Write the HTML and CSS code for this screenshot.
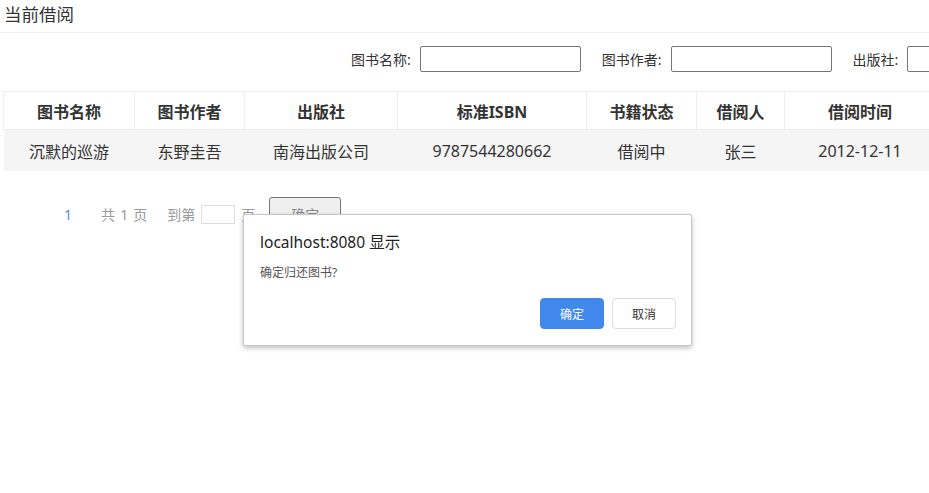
FILE: index.html
```html
<!DOCTYPE html>
<html lang="zh-CN">
<head>
    <meta charset="UTF-8">
    <title>当前借阅</title>
    <link rel="stylesheet" href="styles.css">
</head>
<body>
    <div class="page-title">当前借阅</div>

    <div class="search-bar">
        <label>图书名称:</label>
        <input type="text" class="search-input">
        <label>图书作者:</label>
        <input type="text" class="search-input">
        <label>出版社:</label>
        <input type="text" class="search-input">
    </div>

    <table class="borrow-table">
        <thead>
            <tr>
                <th class="col-name">图书名称</th>
                <th class="col-author">图书作者</th>
                <th class="col-press">出版社</th>
                <th class="col-isbn">标准ISBN</th>
                <th class="col-state">书籍状态</th>
                <th class="col-user">借阅人</th>
                <th class="col-time">借阅时间</th>
            </tr>
        </thead>
        <tbody>
            <tr>
                <td>沉默的巡游</td>
                <td>东野圭吾</td>
                <td>南海出版公司</td>
                <td>9787544280662</td>
                <td>借阅中</td>
                <td>张三</td>
                <td>2012-12-11</td>
            </tr>
        </tbody>
    </table>

    <div class="pager">
        <span class="pager-current">1</span>
        <span class="pager-total">共 1 页</span>
        <span class="pager-jump">到第</span>
        <input type="text" class="pager-input">
        <span class="pager-jump">页</span>
        <button class="pager-button">确定</button>
    </div>

    <!-- browser confirm() dialog -->
    <div class="confirm-dialog">
        <div class="confirm-title">localhost:8080 显示</div>
        <div class="confirm-message">确定归还图书?</div>
        <div class="confirm-actions">
            <button class="confirm-ok">确定</button>
            <button class="confirm-cancel">取消</button>
        </div>
    </div>
</body>
</html>
```

FILE: styles.css
```css
body {
    font-family: "Noto Sans", "Noto Sans CJK SC", sans-serif;
    margin: 0;
    padding: 0;
    color: #333;
    background-color: #fff;
    overflow: hidden;
    width: 929px;
    height: 493px;
    position: relative;
}
.page-title {
    font-size: 17.5px;
    line-height: 22px;
    padding: 3px 4px 7px;
    border-bottom: 1px solid #eee;
}
.search-bar {
    display: flex;
    align-items: center;
    white-space: nowrap;
    padding: 13px 0 0 351px;
    height: 26px;
    font-size: 14px;
}
.search-bar label {
    margin-right: 9px;
    word-spacing: 1px;
}
.search-input {
    flex: none;
    width: 161px;
    height: 26px;
    box-sizing: border-box;
    border: 1px solid #767676;
    border-radius: 2px;
    margin: 0 21px 0 0;
    padding: 0 4px;
}
.borrow-table {
    margin: 19px 0 0 3px;
    border-collapse: collapse;
    table-layout: fixed;
    width: 925px;
    font-size: 16px;
    text-align: center;
}
.borrow-table th {
    height: 37px;
    font-weight: bold;
    border: 1px solid #eee;
    padding: 0;
}
.borrow-table td {
    height: 41px;
    background-color: #f5f5f5;
    padding: 0;
}
.col-name { width: 130px; }
.col-author { width: 109px; }
.col-press { width: 152px; }
.col-isbn { width: 188px; }
.col-state { width: 109px; }
.col-user { width: 87px; }
.col-time { width: 150px; }
.pager {
    display: flex;
    align-items: center;
    padding: 26px 0 0 64px;
    font-size: 14px;
    color: #999;
}
.pager-current {
    color: #5b8fd8;
    margin-right: 29px;
}
.pager-total {
    margin-right: 20px;
    word-spacing: 1.5px;
}
.pager-input {
    width: 34px;
    height: 19px;
    box-sizing: border-box;
    border: 1px solid #ddd;
    margin: 0 6px;
    padding: 0;
}
.pager-button {
    margin-left: 14px;
    width: 72px;
    height: 34px;
    background-color: #efefef;
    border: 1px solid #767676;
    border-radius: 3px;
    color: #888;
    font-family: inherit;
    font-size: 14px;
}
.confirm-dialog {
    position: absolute;
    left: 243px;
    top: 214px;
    width: 449px;
    height: 132px;
    box-sizing: border-box;
    background-color: #fff;
    border: 1px solid #c8c8c8;
    border-radius: 2px;
    box-shadow: 0 2px 5px rgba(0, 0, 0, 0.25);
    padding: 17px 15px 0 16px;
}
.confirm-title {
    font-size: 15.5px;
    line-height: 20px;
    color: #222;
}
.confirm-message {
    font-size: 12px;
    line-height: 16px;
    color: #555;
    margin-top: 13px;
}
.confirm-actions {
    display: flex;
    justify-content: flex-end;
    gap: 8px;
    margin-top: 17px;
}
.confirm-ok, .confirm-cancel {
    width: 64px;
    height: 31px;
    border-radius: 4px;
    font-family: inherit;
    font-size: 12px;
    cursor: pointer;
}
.confirm-ok {
    background-color: #4088ec;
    border: 1px solid #4088ec;
    color: #fff;
}
.confirm-cancel {
    background-color: #fff;
    border: 1px solid #dadce0;
    color: #333;
}
```
